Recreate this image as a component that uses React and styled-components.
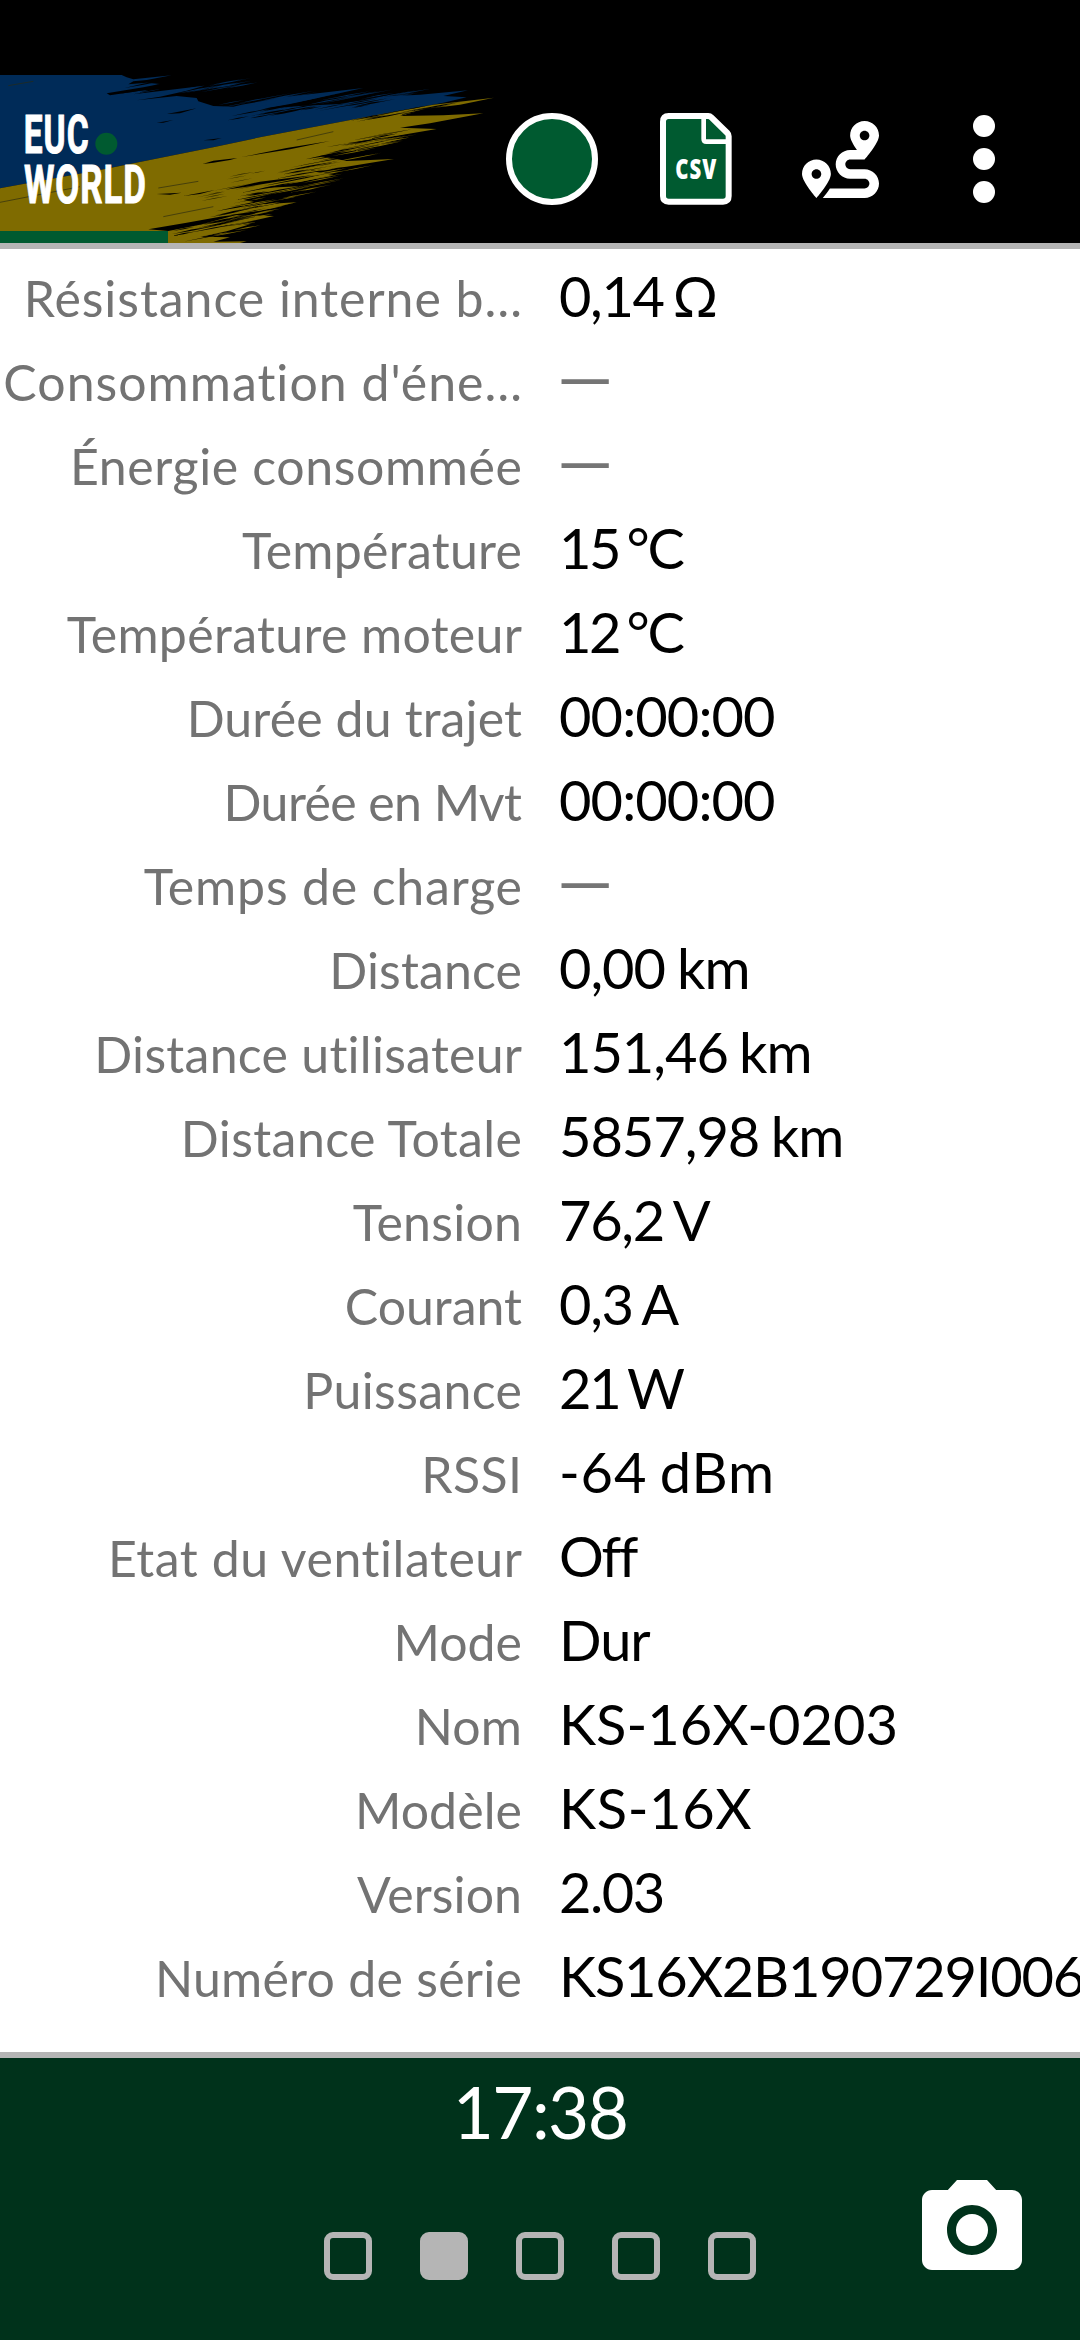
import React from 'react';
import styled, { createGlobalStyle } from 'styled-components';
import { FaRoute } from 'react-icons/fa';

const GlobalStyle = createGlobalStyle`
  html, body { margin: 0; padding: 0; background: #fff; }
  body { font-family: Lato, "Open Sans", sans-serif; overflow: hidden; }
`;

const GREEN = '#005a30';
const DEEP_GREEN = '#00321b';
const RULE = '#b5b5b5';
const NAVY = '#002b58';
const GOLD = '#7f6b00';

const Screen = styled.div`
  width: 1080px;
  height: 2340px;
  display: flex;
  flex-direction: column;
  background: #fff;
  overflow: hidden;
`;

const StatusBar = styled.div`
  flex: none;
  height: 75px;
  background: #000;
`;

const Header = styled.header`
  position: relative;
  flex: none;
  height: 168px;
  display: flex;
  background: #000;
  border-bottom: 6px solid ${RULE};
`;

const Brand = styled.svg`
  flex: none;
  display: block;
  width: 500px;
  height: 168px;
  margin-right: -20px;
`;

const Progress = styled.div`
  position: absolute;
  left: 0;
  bottom: 0;
  width: 168px;
  height: 12px;
  background: ${GREEN};
`;

const Actions = styled.nav`
  display: flex;
`;

const Action = styled.button`
  width: 144px;
  height: 168px;
  padding: 0;
  border: 0;
  background: none;
  color: #fff;
  display: flex;
  align-items: center;
  justify-content: center;
`;

const RecordDot = styled.span`
  box-sizing: border-box;
  width: 92px;
  height: 92px;
  border: 6px solid #fff;
  border-radius: 50%;
  background: ${GREEN};
`;

const Kebab = styled.span`
  display: flex;
  flex-direction: column;
  gap: 11px;
`;

const KebabDot = styled.span`
  width: 22px;
  height: 22px;
  border-radius: 50%;
  background: #fff;
`;

const List = styled.main`
  flex: 1;
  min-height: 0;
  padding-top: 5px;
  overflow: hidden;
`;

const Row = styled.div`
  height: 84px;
  display: grid;
  grid-template-columns: 522px 521px;
  column-gap: 37px;
  align-items: baseline;
  line-height: 84px;
  white-space: pre;
`;

const Label = styled.span`
  justify-self: end;
  font-size: 50px;
  color: #737373;
  letter-spacing: ${(p) => p.$track}px;
  margin-right: ${(p) => -p.$track}px;
`;

const Value = styled.span`
  font-size: 56px;
  color: #000;
  letter-spacing: ${(p) => p.$track}px;
  word-spacing: ${(p) => p.$gap}px;
`;

const Dash = styled.span`
  position: relative;
  top: 2px;
  margin-left: -2px;
  font-size: 71px;
  line-height: 0;
  color: #757575;
`;

const Divider = styled.div`
  flex: none;
  height: 6px;
  background: ${RULE};
`;

const Footer = styled.footer`
  flex: none;
  height: 282px;
  display: grid;
  grid-template-columns: 324px 432px 324px;
  grid-template-rows: 112px 170px;
  background: ${DEEP_GREEN};
`;

const Clock = styled.time`
  grid-column: 2;
  justify-self: center;
  padding-top: 9px;
  font-size: 71px;
  line-height: 90px;
  letter-spacing: -1.6px;
  color: #fff;
`;

const Pager = styled.div`
  grid-column: 2;
  grid-row: 2;
  display: flex;
  justify-content: space-between;
  padding-top: 62px;
`;

const Page = styled.span`
  box-sizing: border-box;
  width: 48px;
  height: 48px;
  border: 6px solid ${RULE};
  border-radius: 9px;
  background: ${(p) => (p.$active ? RULE : 'transparent')};
`;

const CameraButton = styled.button`
  grid-column: 3;
  grid-row: 2;
  justify-self: end;
  align-self: start;
  width: 120px;
  height: 120px;
  margin-right: 48px;
  padding: 0;
  border: 0;
  background: none;
  color: #fff;
`;

const Icon = styled.svg`
  display: block;
  width: ${(p) => p.$w}px;
  height: ${(p) => p.$h}px;
`;

/* Deterministic noise for the bristle marks of the flag brush stroke. */
function noise(seed) {
  let s = seed;
  return () => {
    s = (s * 16807) % 2147483647;
    return s / 2147483647;
  };
}

/* Thin tapered marks, all leaning the way the brush was pulled. */
function bristles(seed, count, from, to, spread, min, max, thick) {
  const r = noise(seed * 7919);
  r();
  r();
  let d = '';
  for (let i = 0; i < count; i += 1) {
    const t = r();
    const x = from[0] + (to[0] - from[0]) * t + (r() - 0.5) * spread;
    const y = from[1] + (to[1] - from[1]) * t + (r() - 0.5) * spread * 0.4;
    const len = min + r() * (max - min);
    const w = 0.8 + r() * thick;
    const rise = len * 0.19;
    d += `M${x.toFixed(0)} ${y.toFixed(0)}l${(len * 0.5).toFixed(0)} ${(-rise * 0.5 - w).toFixed(1)}l${(len * 0.5).toFixed(0)} ${(-rise * 0.5 + w).toFixed(1)}l${(-len * 0.5).toFixed(0)} ${(rise * 0.5 + w * 0.6).toFixed(1)}z`;
  }
  return d;
}

const BLUE_SHAPE =
  'M0 45H365L380 52L400 58L515 46L440 60L400 64L385 73L440 68L480 72L430 82L320 100L330 106L420 92L480 88L400 103L613 77L560 92L480 110L410 121L530 108L590 114L595 124L640 138L700 140L725 134L850 112L1090 84L980 108L870 132L790 146L900 138L1020 132L1130 110L1260 104L1404 91L1330 108L1400 112L1330 128L1130 165L780 232L640 262L300 330L0 385Z';
const GOLD_SHAPE =
  'M0 385L300 330L640 262L780 232L1130 165L1300 134L1482 113L1380 134L1280 146L1200 168L1330 166L1450 160L1290 190L1200 203L1310 207L1200 226L1040 250L1205 236L1060 272L960 288L1040 303L1182 297L1040 320L930 332L1000 345L900 366L790 384L910 378L840 396L730 420L800 432L890 427L780 452L690 465L822 468L740 486L660 500L750 493L680 514L600 530L690 532L640 545L740 544L720 549H0Z';

function BrandBanner() {
  return (
    <Brand viewBox="0 45 1500 504" aria-label="EUC World">
      <path d={BLUE_SHAPE} fill={NAVY} />
      <path d={GOLD_SHAPE} fill={GOLD} />
      <path d={bristles(11, 34, [640, 138], [1180, 114], 50, 60, 190, 1.4)} fill={NAVY} />
      <path d={bristles(5, 10, [520, 95], [660, 80], 50, 60, 150, 2)} fill={NAVY} />
      <path d={bristles(23, 34, [660, 175], [1100, 132], 60, 50, 150, 1.6)} fill="#000" />
      <path d={bristles(31, 12, [350, 100], [500, 80], 50, 60, 120, 2)} fill="#000" />
      <path d={bristles(47, 70, [520, 540], [1080, 235], 80, 60, 190, 2)} fill="#000" />
      <path d={bristles(61, 60, [600, 540], [1130, 235], 90, 50, 160, 1.5)} fill={GOLD} />
      <path d={bristles(71, 14, [560, 430], [960, 260], 120, 40, 110, 0.6)} fill="#2b2500" />
      <path d={bristles(83, 12, [1040, 190], [1250, 150], 40, 60, 150, 1.4)} fill="#000" />
      <path
        d="M608 312L640 302L712 294L690 300L640 308ZM725 291L860 264L990 243L870 268ZM675 389L780 365L940 345L850 362L740 380ZM500 162L590 145L540 160ZM470 188L520 180L490 188ZM610 241L665 234L640 241ZM550 408L645 390L600 402ZM470 402L545 398L510 404ZM445 508L560 488L660 470L720 462L600 494L505 513Z"
        fill="#000"
      />
      <path d="M0 427L240 380M475 384L595 364M490 470L640 440M890 240L1000 215M25 77L100 64" stroke="#2b2b10" strokeWidth="2" fill="none" />
      <circle cx="319" cy="251" r="33" fill={GREEN} />
      <g fill="#fff" stroke="#fff" strokeWidth="3" fontFamily="Roboto, sans-serif" fontWeight="700" fontSize="161">
        <text x="71" y="278" textLength="198" letterSpacing="5" lengthAdjust="spacingAndGlyphs">EUC</text>
        <text x="72" y="430" textLength="368" letterSpacing="4" lengthAdjust="spacingAndGlyphs">WORLD</text>
      </g>
    </Brand>
  );
}

function CsvIcon() {
  return (
    <Icon $w={72} $h={92} viewBox="60 39 216 276">
      <path
        d="M86 48H205Q210 48 214 52L262 99Q266 103 266 109V288Q266 305 249 305H86Q69 305 69 288V65Q69 48 86 48Z"
        fill={GREEN}
        stroke="#fff"
        strokeWidth="18"
      />
      <path d="M191 50V117Q191 125 199 125H266" fill="none" stroke="#fff" strokeWidth="14" />
      <text
        x="106"
        y="236"
        textLength="126"
        letterSpacing="4"
        lengthAdjust="spacingAndGlyphs"
        fontFamily="Open Sans, sans-serif"
        fontWeight="800"
        fontSize="83"
        fill="#fff"
      >
        CSV
      </text>
    </Icon>
  );
}

function CameraIcon() {
  return (
    <Icon $w={120} $h={120} viewBox="0 0 24 24" fill="currentColor">
      <circle cx="12" cy="12" r="3.2" />
      <path d="M9 2L7.17 4H4c-1.1 0-2 .9-2 2v12c0 1.1.9 2 2 2h16c1.1 0 2-.9 2-2V6c0-1.1-.9-2-2-2h-3.17L15 2H9zm3 15c-2.76 0-5-2.24-5-5s2.24-5 5-5 5 2.24 5 5-2.24 5-5 5z" />
    </Icon>
  );
}

/* label, label tracking, value (null while unavailable), value tracking, unit gap */
const READINGS = [
  ['Résistance interne b…', 0.95, '0,14 Ω', -1.4, -3.8],
  ["Consommation d'éne…", 1.02, null],
  ['Énergie consommée', 0.63, null],
  ['Température', 0.3, '15 °C', -2.4, -4.5],
  ['Température moteur', 0.35, '12 °C', -2.4, -4.5],
  ['Durée du trajet', 0.12, '00:00:00', -0.9],
  ['Durée en Mvt', -0.59, '00:00:00', -0.9],
  ['Temps de charge', 0.82, null],
  ['Distance', 0.15, '0,00 km', -1.05, -1.2],
  ['Distance utilisateur', 0.27, '151,46 km', -1.05, -2],
  ['Distance Totale', 0.42, '5857,98 km', -1.05, -1.8],
  ['Tension', 0.28, '76,2 V', -1.3, -2.2],
  ['Courant', 0, '0,3 A', -1.3, -2.8],
  ['Puissance', 0.4, '21 W', -2.2, -4],
  ['RSSI', 0.4, '-64 dBm', 0.8, -2.5],
  ['Etat du ventilateur', 0.56, 'Off', -2.2],
  ['Mode', 0, 'Dur', -1],
  ['Nom', 0.2, 'KS-16X-0203', 0],
  ['Modèle', 0.1, 'KS-16X', 0.6],
  ['Version', 0.07, '2.03', -1.5],
  ['Numéro de série', 0.27, 'KS16X2B190729I006', -1.2],
];

export default function App() {
  return (
    <Screen>
      <GlobalStyle />
      <StatusBar />
      <Header>
        <BrandBanner />
        <Progress />
        <Actions>
          <Action aria-label="Record"><RecordDot /></Action>
          <Action aria-label="CSV"><CsvIcon /></Action>
          <Action aria-label="Route"><FaRoute size={77} /></Action>
          <Action aria-label="Menu">
            <Kebab><KebabDot /><KebabDot /><KebabDot /></Kebab>
          </Action>
        </Actions>
      </Header>
      <List>
        {READINGS.map(([label, labelTrack, value, track = 0, gap = 0]) => (
          <Row key={label}>
            <Label $track={labelTrack}>{label}</Label>
            <Value $track={track} $gap={gap}>{value === null ? <Dash>—</Dash> : value}</Value>
          </Row>
        ))}
      </List>
      <Divider />
      <Footer>
        <Clock>17:38</Clock>
        <Pager>
          {[0, 1, 2, 3, 4].map((i) => (
            <Page key={i} $active={i === 1} />
          ))}
        </Pager>
        <CameraButton aria-label="Camera"><CameraIcon /></CameraButton>
      </Footer>
    </Screen>
  );
}
